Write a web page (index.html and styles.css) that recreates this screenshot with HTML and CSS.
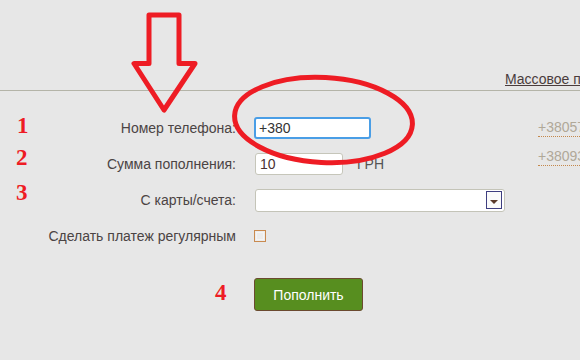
FILE: index.html
```html
<!DOCTYPE html>
<html lang="ru">
<head>
  <meta charset="UTF-8" />
  <title>Пополнение счета</title>
  <link rel="stylesheet" href="styles.css">
</head>
<body>
  <div class="page">
    <header class="top">
      <a href="#" class="mass-link">Массовое пополнение</a>
    </header>

    <main class="content">
      <form class="pay-form" onsubmit="return false">
        <div class="row">
          <label class="lbl">Номер телефона:</label>
          <input class="inp phone" value="+380" />
        </div>
        <div class="row">
          <label class="lbl">Сумма пополнения:</label>
          <div class="sum">
            <input class="inp amount" value="10" />
            <span class="cur">ГРН</span>
          </div>
        </div>
        <div class="row">
          <label class="lbl">С карты/счета:</label>
          <div class="select">
            <span class="select-btn"><i class="tri"></i></span>
          </div>
        </div>
        <div class="row">
          <label class="lbl">Сделать платеж регулярным</label>
          <span class="check"><i></i></span>
        </div>
        <div class="row submit-row">
          <span></span>
          <button class="btn">Пополнить</button>
        </div>
      </form>

      <aside class="recent">
        <a href="#">+380571234567</a>
        <a href="#">+380931234567</a>
      </aside>
    </main>

    <!-- red markup drawn over the screenshot -->
    <svg class="marks" width="580" height="360" viewBox="0 0 580 360">
      <polygon points="149,15 179,15 179,63.5 195,63.5 164,110 134,63.5 149,63.5"
               fill="none" stroke="#ee1c24" stroke-width="5" stroke-linejoin="round" />
      <ellipse cx="323.5" cy="120" rx="89" ry="42.5" transform="rotate(3 323.5 120)"
               fill="none" stroke="#ee1c24" stroke-width="5" />
      <text x="17" y="133" class="num">1</text>
      <text x="16" y="165" class="num">2</text>
      <text x="16" y="200" class="num">3</text>
      <text x="215" y="300" class="num">4</text>
    </svg>
  </div>
</body>
</html>
```

FILE: styles.css
```css
* { box-sizing: border-box; }
html, body {
  margin: 0;
  overflow: hidden;
}
body {
  background: #e7e7e7;
  color: #4b4444;
  font-family: "Liberation Sans", Arial, sans-serif;
  font-size: 14px;
}
.page {
  position: relative;
  width: 580px;
  height: 360px;
}
.top {
  height: 91px;
  border-bottom: 1px solid #b4b4a8;
  display: flex;
  align-items: flex-end;
  padding-left: 505px;
  white-space: nowrap;
}
.mass-link {
  color: #4a3c3c;
  line-height: 17px;
  margin-bottom: 2px;
}
.content {
  display: flex;
  padding-top: 19px;
}
.pay-form { width: 505px; }
.row {
  display: grid;
  grid-template-columns: 236px auto;
  column-gap: 18px;
  align-items: center;
  justify-items: start;
  height: 36px;
}
.lbl {
  justify-self: end;
  white-space: nowrap;
}
.inp {
  height: 22px;
  background: #fff;
  font-family: inherit;
  font-size: 14px;
  color: #333;
  outline: none;
}
.phone {
  width: 117px;
  border: 2px solid #4a9ee6;
  border-radius: 3px;
  padding: 0 3px;
}
.sum {
  display: flex;
  align-items: center;
  margin-left: 1px;
}
.amount {
  width: 88px;
  border: 1px solid #c6c6ba;
  border-radius: 3px;
  padding: 0 4px;
  color: #4a3030;
}
.cur {
  margin-left: 14px;
  color: #555;
}
.select {
  width: 250px;
  height: 23px;
  margin-left: 1px;
  background: #fff;
  border: 1px solid #c4c4b8;
  border-radius: 3px;
  display: flex;
  justify-content: flex-end;
  align-items: center;
  padding-right: 2px;
}
.select-btn {
  width: 16px;
  height: 18px;
  border: 1px solid #3e3e80;
  background: #fafafa;
  display: flex;
  justify-content: center;
  align-items: center;
  padding-top: 3px;
}
.tri {
  width: 0;
  height: 0;
  border-left: 4px solid transparent;
  border-right: 4px solid transparent;
  border-top: 4px solid #5a3a2a;
}
.check {
  width: 12px;
  height: 12px;
  border: 1px solid #c98a4f;
  background: #ececec;
  padding: 1px;
}
.check i {
  display: block;
  width: 100%;
  height: 100%;
  border: 1px solid #f4f4f4;
}
.submit-row {
  margin-top: 24px;
  height: 33px;
}
.btn {
  width: 109px;
  height: 33px;
  background: #578e1f;
  border: 1px solid #6b4a30;
  border-radius: 3px;
  color: #fff;
  font-family: inherit;
  font-size: 14px;
  cursor: pointer;
}
.recent {
  display: flex;
  flex-direction: column;
  align-items: flex-start;
  gap: 11px;
  margin-left: 33px;
  padding-top: 9px;
  white-space: nowrap;
}
.recent a {
  color: #b0a898;
  line-height: 17px;
  text-decoration: none;
  border-bottom: 1px dotted #c4884c;
}
.marks {
  position: absolute;
  left: 0;
  top: 0;
  pointer-events: none;
}
.num {
  fill: #ee1c24;
  font-family: "Liberation Serif", "Times New Roman", serif;
  font-weight: bold;
  font-size: 23px;
}
```
